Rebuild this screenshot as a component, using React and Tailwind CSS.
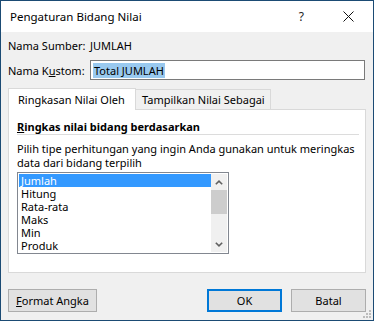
import React from "react";

const font = { fontFamily: '"Noto Sans", "Open Sans", sans-serif' };

function Grip() {
  const dots = [
    [8, 2],
    [5, 5], [8, 5],
    [2, 8], [5, 8], [8, 8],
  ];
  return (
    <svg width="11" height="11" viewBox="0 0 11 11" className="absolute right-[1px] bottom-[1px]">
      {dots.map(([x, y], i) => (
        <rect key={i} x={x} y={y} width="2" height="2" fill="#bcbcbc" />
      ))}
    </svg>
  );
}

export default function App() {
  const items = ["Jumlah", "Hitung", "Rata-rata", "Maks", "Min", "Produk"];
  return (
    <div
      className="relative w-[374px] h-[321px] border border-[#1b4b74] bg-[#f0f0f0] flex flex-col text-[11px] text-black leading-none whitespace-nowrap"
      style={font}
    >
      {/* title bar */}
      <div className="h-[31px] bg-white flex items-center shrink-0">
        <span className="ml-[9px] text-[11.5px]">Pengaturan Bidang Nilai</span>
        <div className="ml-auto flex items-center">
          <span className="text-[12px] text-[#222] mr-[39px]">?</span>
          <svg width="11" height="11" viewBox="0 0 11 11" className="mr-[19px]">
            <path d="M0.5 0.5 L10.5 10.5 M10.5 0.5 L0.5 10.5" stroke="#111" strokeWidth="1" />
          </svg>
        </div>
      </div>

      <div className="flex flex-col px-[7px] flex-1">
        <div className="mt-[3px] h-[20px] flex items-center">
          <span className="w-[82px] shrink-0">Nama Sumber:</span>
          <span>JUMLAH</span>
        </div>
        <div className="mt-[5px] h-[20px] flex items-center">
          <span className="w-[82px] shrink-0">
            Nama K<span className="underline">u</span>stom:
          </span>
          <div className="w-[275px] h-[20px] border border-[#7a7a7a] bg-white flex items-center pl-[2px]">
            <span className="bg-[#99c9ef] px-[1px] py-[2px]">Total JUMLAH</span>
          </div>
        </div>

        {/* tabs */}
        <div className="mt-[8px] flex items-end h-[22px] relative z-10">
          <div className="w-[128px] h-[22px] bg-white border border-b-0 border-[#d9d9d9] flex items-center pl-[9px]">
            Ringkasan Nilai Oleh
          </div>
          <div className="w-[135px] h-[20px] bg-[#f0f0f0] border border-l-0 border-b-0 border-[#d9d9d9] flex items-center pl-[6px] mb-[1px]">
            Tampilkan Nilai Sebagai
          </div>
        </div>
        <div className="-mt-[1px] h-[164px] bg-white border border-[#d9d9d9] flex flex-col px-[8px]">
          <div className="mt-[9px] font-bold h-[14px] flex items-center">
            <span>
              <span className="underline">R</span>ingkas nilai bidang berdasarkan
            </span>
          </div>
          <div className="mt-[1px] h-[1px] bg-[#dcdcdc] mr-[-2px]"></div>
          <div className="mt-[6px] h-[14px] flex items-center">
            Pilih tipe perhitungan yang ingin Anda gunakan untuk meringkas
          </div>
          <div className="h-[14px] flex items-center">data dari bidang terpilih</div>

          {/* listbox */}
          <div className="mt-[3px] w-[212px] h-[82px] border border-[#828790] bg-white flex p-[1px]">
            <div className="flex-1 flex flex-col">
              {items.map((it, i) => (
                <div
                  key={it}
                  className={
                    "h-[13px] shrink-0 flex items-center pl-[2px] " +
                    (i === 0 ? "bg-[#3399ff] text-white" : "")
                  }
                >
                  {it}
                </div>
              ))}
            </div>
            <div className="w-[16px] bg-[#f0f0f0] flex flex-col">
              <div className="h-[16px] flex items-center justify-center">
                <svg width="8" height="5" viewBox="0 0 8 5">
                  <path d="M0.8 4.3 L4 1.2 L7.2 4.3" fill="none" stroke="#606060" strokeWidth="1.6" />
                </svg>
              </div>
              <div className="h-[24px] bg-[#cdcdcd]"></div>
              <div className="flex-1"></div>
              <div className="h-[16px] flex items-center justify-center">
                <svg width="8" height="5" viewBox="0 0 8 5">
                  <path d="M0.8 0.7 L4 3.8 L7.2 0.7" fill="none" stroke="#606060" strokeWidth="1.6" />
                </svg>
              </div>
            </div>
          </div>
        </div>

        {/* buttons */}
        <div className="mt-[16px] flex items-center">
          <div className="w-[89px] h-[23px] border border-[#adadad] bg-[#e1e1e1] flex items-center justify-center">
            <span>
              <span className="underline">F</span>ormat Angka
            </span>
          </div>
          <div className="ml-auto w-[75px] h-[23px] border-2 border-[#0078d7] bg-[#e1e1e1] flex items-center justify-center">
            OK
          </div>
          <div className="ml-[9px] w-[75px] h-[23px] border border-[#adadad] bg-[#e1e1e1] flex items-center justify-center">
            Batal
          </div>
        </div>
      </div>
      <Grip />
    </div>
  );
}
